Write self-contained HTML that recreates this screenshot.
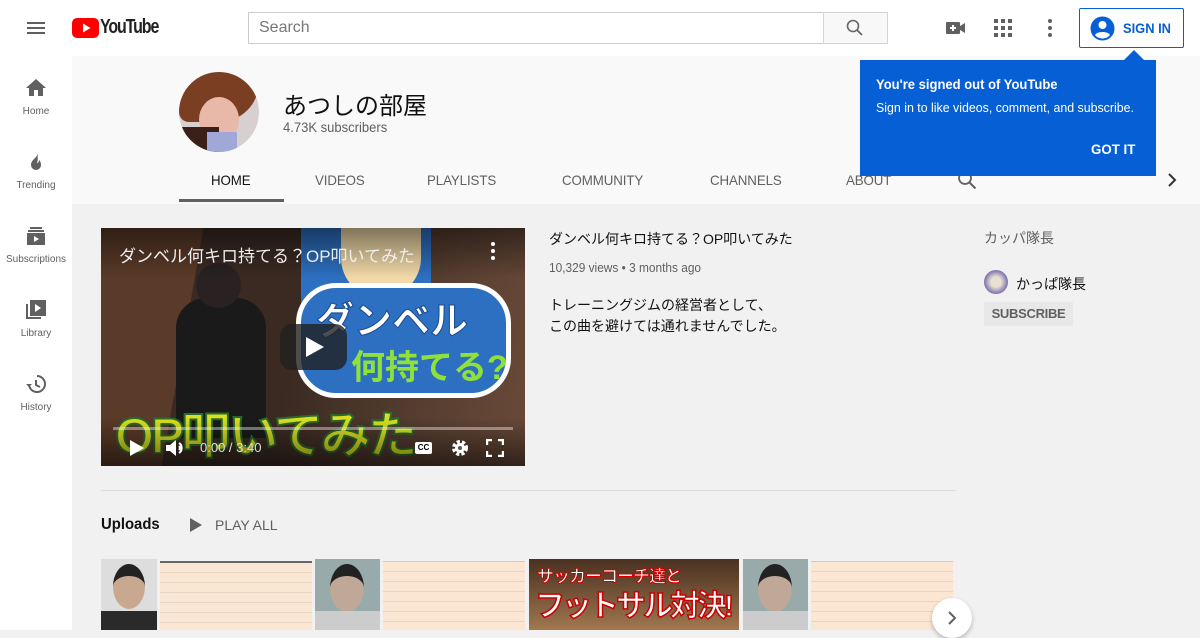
<!DOCTYPE html>
<html><head><meta charset="utf-8"><style>
*{box-sizing:border-box;margin:0;padding:0}
body{width:1200px;height:630px;overflow:hidden;background:#f1f1f1;font-family:"Liberation Sans","Noto Sans CJK JP",sans-serif;position:relative;color:#111}
.abs{position:absolute}
.hdr{left:0;top:0;width:1200px;height:56px;background:#fff}
.side{left:0;top:56px;width:72px;height:574px;background:#fff}
.si{position:absolute;left:0;width:72px;text-align:center;font-size:10px;color:#606060}
.si svg{display:block;margin:0 auto 6px}
.ch{left:72px;top:56px;width:1128px;height:148px;background:#f9f9f9}
.tab{position:absolute;top:172px;font-size:14px;color:#606060;letter-spacing:-.1px;transform:scaleX(.95);transform-origin:left}
</style></head><body>
<div class="abs hdr"></div>
<svg class="abs" style="left:24px;top:16px" width="24" height="24"><path d="M3 6h18v2H3zM3 11h18v2H3zM3 16h18v2H3z" fill="#606060"/></svg>
<svg class="abs" style="left:72px;top:18px" width="30" height="20"><rect x="0" y="0" width="27" height="20" rx="5" fill="#f00"/><path d="M11 5.5l7.5 4.5-7.5 4.5z" fill="#fff"/></svg>
<div class="abs" style="left:100px;top:16px;font-size:20px;font-weight:bold;letter-spacing:-1.4px;transform:scaleX(.8);transform-origin:left;color:#222">YouTube</div>
<div class="abs" style="left:248px;top:12px;width:576px;height:32px;border:1px solid #ccc;background:#fff;font-size:16px;color:#777;padding:6px 10px">Search</div>
<div class="abs" style="left:823px;top:12px;width:65px;height:32px;border:1px solid #d3d3d3;background:#f8f8f8"></div>
<svg class="abs" style="left:845px;top:18px" width="20" height="20"><circle cx="8" cy="8" r="5.5" stroke="#666" stroke-width="1.6" fill="none"/><path d="M12 12l5 5" stroke="#666" stroke-width="1.8"/></svg>
<svg class="abs" style="left:944px;top:17px" width="22" height="22"><rect x="2" y="5" width="14" height="12" rx="1" fill="#606060"/><path d="M16 9l5-3v10l-5-3z" fill="#606060"/><path d="M9 8v6M6 11h6" stroke="#fff" stroke-width="2"/></svg>
<svg class="abs" style="left:993px;top:18px" width="20" height="20"><g fill="#606060"><rect x="1" y="1" width="4" height="4"/><rect x="8" y="1" width="4" height="4"/><rect x="15" y="1" width="4" height="4"/><rect x="1" y="8" width="4" height="4"/><rect x="8" y="8" width="4" height="4"/><rect x="15" y="8" width="4" height="4"/><rect x="1" y="15" width="4" height="4"/><rect x="8" y="15" width="4" height="4"/><rect x="15" y="15" width="4" height="4"/></g></svg>
<svg class="abs" style="left:1040px;top:17px" width="20" height="22"><g fill="#606060"><circle cx="10" cy="4" r="2"/><circle cx="10" cy="11" r="2"/><circle cx="10" cy="18" r="2"/></g></svg>
<div class="abs" style="left:1079px;top:8px;width:105px;height:40px;border:1px solid #065fd4;border-radius:2px;background:#fff"></div>
<svg class="abs" style="left:1090px;top:16px" width="25" height="25"><circle cx="12.5" cy="12.5" r="12" fill="#065fd4"/><circle cx="12.5" cy="9" r="4" fill="#fff"/><path d="M5 19c2-4 13-4 15 0c-2 2.5-5 3.5-7.5 3.5S7 21.5 5 19z" fill="#fff"/></svg>
<div class="abs" style="left:1123px;top:20px;font-size:14px;font-weight:bold;color:#065fd4;transform:scaleX(.92);transform-origin:left">SIGN IN</div>

<div class="abs side"></div>
<div class="si" style="top:76px"><svg width="24" height="24"><path d="M10 20v-6h4v6h5v-8h3L12 3 2 12h3v8z" fill="#606060"/></svg>Home</div>
<div class="si" style="top:150px"><svg width="24" height="24"><path d="M13 2c1 3-1 5-2 6-2 2-4 4-4 7a5 5 0 0010 0c0-3-1-4-2-5 0 2-1 3-2 3 1-3 1-7 0-11z" fill="#606060"/></svg>Trending</div>
<div class="si" style="top:224px"><svg width="24" height="24"><g fill="#606060"><rect x="6" y="3" width="12" height="2"/><rect x="4" y="6" width="16" height="2"/><rect x="3" y="9" width="18" height="12"/></g><path d="M10 12v6l5-3z" fill="#fff"/></svg>Subscriptions</div>
<div class="si" style="top:298px"><svg width="24" height="24"><g fill="#606060"><rect x="2" y="6" width="2" height="15"/><rect x="2" y="19" width="15" height="2"/><rect x="6" y="2" width="16" height="16"/></g><path d="M11 6v8l6-4z" fill="#fff"/></svg>Library</div>
<div class="si" style="top:372px"><svg width="24" height="24"><path d="M5 12a8 8 0 108-8" stroke="#606060" stroke-width="2" fill="none"/><path d="M2 12l3 3 3-3z" fill="#606060"/><path d="M12 8v5l4 2" stroke="#606060" stroke-width="2" fill="none"/></svg>History</div>

<div class="abs ch"></div>
<div class="abs" style="left:179px;top:72px;width:80px;height:80px;border-radius:50%;overflow:hidden;background:#d8d0d0">
<div class="abs" style="left:0;top:0;width:80px;height:50px;background:#7a3e22;border-radius:0 0 40px 10px"></div>
<div class="abs" style="left:20px;top:25px;width:40px;height:45px;background:#e8b8a8;border-radius:50%"></div>
<div class="abs" style="left:0;top:55px;width:40px;height:30px;background:#3a2018"></div>
<div class="abs" style="left:28px;top:60px;width:30px;height:25px;background:#a0a8d8"></div>
</div>
<div class="abs" style="left:283px;top:86px;font-size:24px;color:#111">あつしの部屋</div>
<div class="abs" style="left:283px;top:119px;font-size:14px;color:#606060;transform:scaleX(.93);transform-origin:left">4.73K subscribers</div>
<div class="tab" style="left:211px;color:#111">HOME</div>
<div class="abs" style="left:179px;top:199px;width:105px;height:3px;background:#606060"></div>
<div class="tab" style="left:315px">VIDEOS</div>
<div class="tab" style="left:427px">PLAYLISTS</div>
<div class="tab" style="left:562px">COMMUNITY</div>
<div class="tab" style="left:710px">CHANNELS</div>
<div class="tab" style="left:846px">ABOUT</div>
<svg class="abs" style="left:957px;top:170px" width="22" height="22"><circle cx="8" cy="8" r="6" stroke="#606060" stroke-width="1.8" fill="none"/><path d="M12.5 12.5l6 6" stroke="#606060" stroke-width="2"/></svg>
<svg class="abs" style="left:1164px;top:171px" width="16" height="18"><path d="M5 3l6 6-6 6" stroke="#333" stroke-width="2" fill="none"/></svg>

<div class="abs" style="left:860px;top:60px;width:296px;height:116px;background:#065fd4"></div>
<div class="abs" style="left:1124px;top:50px;width:0;height:0;border-left:10px solid transparent;border-right:10px solid transparent;border-bottom:10px solid #065fd4"></div>
<div class="abs" style="left:876px;top:76px;font-size:14px;font-weight:bold;color:#fff;transform:scaleX(.93);transform-origin:left">You're signed out of YouTube</div>
<div class="abs" style="left:876px;top:101px;font-size:12.5px;color:#fff;transform:scaleX(.99);transform-origin:left">Sign in to like videos, comment, and subscribe.</div>
<div class="abs" style="left:1091px;top:141px;font-size:14px;font-weight:bold;color:#fff;transform:scaleX(.95);transform-origin:left">GOT IT</div>

<div class="abs" style="left:101px;top:228px;width:424px;height:238px;overflow:hidden;background:linear-gradient(100deg,#5a3a28 0 22%,#3a2a22 22% 45%,#5a4032 80%,#6a4a38)">
<div class="abs" style="left:200px;top:0;width:130px;height:130px;background:#2d6fc0"></div>
<div class="abs" style="left:240px;top:0;width:80px;height:70px;background:#f1d9a8;border-radius:0 0 40px 40px"></div>
<div class="abs" style="left:75px;top:70px;width:90px;height:140px;background:#1a1a1a;border-radius:30px 30px 0 0"></div>
<div class="abs" style="left:95px;top:35px;width:45px;height:45px;background:#2a2222;border-radius:50%"></div>
<div class="abs" style="left:195px;top:55px;width:215px;height:115px;background:#2d6fc0;border-radius:40px;border:5px solid #fff"></div>
<div class="abs" style="left:215px;top:62px;font-size:38px;font-weight:bold;color:#fff;-webkit-text-stroke:1px #1a4a90">ダンベル</div>
<div class="abs" style="left:250px;top:112px;font-size:34px;font-weight:bold;color:#8fe03a">何持てる?</div>
<div class="abs" style="left:14px;top:168px;font-size:50px;font-weight:bold;color:#d8e020;-webkit-text-stroke:2px #2a6a2a;letter-spacing:-3px">OP叩いてみた</div>
<div class="abs" style="left:0;top:0;width:424px;height:50px;background:linear-gradient(#0007,#0000)"></div>
<div class="abs" style="left:18px;top:14px;font-size:17px;color:#eee">ダンベル何キロ持てる？OP叩いてみた</div>
<svg class="abs" style="left:386px;top:12px" width="12" height="22"><g fill="#fff"><circle cx="6" cy="4" r="2"/><circle cx="6" cy="11" r="2"/><circle cx="6" cy="18" r="2"/></g></svg>
<div class="abs" style="left:179px;top:96px;width:67px;height:46px;border-radius:12px;background:#212121cc"></div>
<svg class="abs" style="left:201px;top:107px" width="24" height="24"><path d="M4 2l18 10-18 10z" fill="#fff"/></svg>
<div class="abs" style="left:0;top:190px;width:424px;height:48px;background:linear-gradient(#0000,#0008)"></div>
<div class="abs" style="left:12px;top:199px;width:400px;height:3px;background:#fff6"></div>
<svg class="abs" style="left:28px;top:212px" width="16" height="16"><path d="M1 0l14 8-14 8z" fill="#fff"/></svg>
<svg class="abs" style="left:64px;top:210px" width="22" height="20"><path d="M1 7h4l6-5v16l-6-5H1z" fill="#fff"/><path d="M14 5a6 6 0 010 10M14 8a3 3 0 010 4" stroke="#fff" stroke-width="2" fill="none"/></svg>
<div class="abs" style="left:99px;top:212px;font-size:13px;color:#ddd">0:00 / 3:40</div>
<div class="abs" style="left:314px;top:214px;width:17px;height:12px;background:#fff;border-radius:2px;font-size:8px;font-weight:bold;color:#000;text-align:center;line-height:12px">CC</div>
<svg class="abs" style="left:349px;top:210px" width="20" height="20"><circle cx="10" cy="10" r="6" fill="none" stroke="#fff" stroke-width="4" stroke-dasharray="3 2"/><circle cx="10" cy="10" r="5" fill="#fff"/><circle cx="10" cy="10" r="2" fill="#555"/></svg>
<svg class="abs" style="left:385px;top:211px" width="18" height="18"><path d="M1 6V1h5M12 1h5v5M17 12v5h-5M6 17H1v-5" stroke="#fff" stroke-width="2.4" fill="none"/></svg>
</div>

<div class="abs" style="left:549px;top:229px;font-size:14px;color:#111">ダンベル何キロ持てる？OP叩いてみた</div>
<div class="abs" style="left:549px;top:261px;font-size:12.5px;color:#606060;transform:scaleX(.95);transform-origin:left">10,329 views • 3 months ago</div>
<div class="abs" style="left:549px;top:295px;font-size:14px;line-height:21px;color:#111">トレーニングジムの経営者として、<br>この曲を避けては通れませんでした。</div>

<div class="abs" style="left:984px;top:228px;font-size:14px;color:#606060">カッパ隊長</div>
<div class="abs" style="left:984px;top:270px;width:24px;height:24px;border-radius:50%;background:radial-gradient(#e8e0d0 30%,#7a70b0 70%)"></div>
<div class="abs" style="left:1016px;top:274px;font-size:14px;color:#111">かっぱ隊長</div>
<div class="abs" style="left:984px;top:302px;width:89px;height:24px;background:#e8e8e8;font-size:13px;font-weight:bold;color:#606060;text-align:center;line-height:24px;letter-spacing:-.3px">SUBSCRIBE</div>

<div class="abs" style="left:101px;top:490px;width:855px;height:1px;background:#ddd"></div>
<div class="abs" style="left:101px;top:516px;font-size:16px;font-weight:bold;transform:scaleX(.93);transform-origin:left">Uploads</div>
<svg class="abs" style="left:188px;top:517px" width="16" height="16"><path d="M2 1l12 7-12 7z" fill="#606060"/></svg>
<div class="abs" style="left:215px;top:517px;font-size:14px;color:#606060">PLAY ALL</div>

<div class="abs" style="left:101px;top:559px;width:56px;height:71px;background:#ddd;overflow:hidden"><div class="abs" style="left:12px;top:5px;width:32px;height:45px;border-radius:50%;background:#c9a890;border-top:12px solid #222"></div><div class="abs" style="left:0;top:52px;width:56px;height:20px;background:#2a2a2a"></div></div>
<div class="abs" style="left:160px;top:561px;width:152px;height:69px;background:repeating-linear-gradient(#fbe6d4 0 9px,#e6d4c4 9px 10px);border-top:2px solid #666"></div>
<div class="abs" style="left:315px;top:559px;width:65px;height:71px;background:#9aa;overflow:hidden"><div class="abs" style="left:15px;top:5px;width:34px;height:48px;border-radius:50%;background:#c0a898;border-top:12px solid #222"></div><div class="abs" style="left:0;top:52px;width:65px;height:20px;background:#ccc"></div></div>
<div class="abs" style="left:383px;top:561px;width:142px;height:69px;background:repeating-linear-gradient(#fbe6d4 0 9px,#e6d4c4 9px 10px);border-top:1px solid #ccc"></div>
<div class="abs" style="left:529px;top:559px;width:210px;height:71px;background:linear-gradient(#4a3020,#a07850);overflow:hidden">
<div style="position:absolute;left:8px;top:3px;font-size:17px;font-weight:bold;color:#fff;-webkit-text-stroke:1px #c00;letter-spacing:-1px">サッカーコーチ達と</div>
<div style="position:absolute;left:6px;top:22px;font-size:30px;font-weight:bold;color:#fff;-webkit-text-stroke:1.5px #c00;letter-spacing:-3px">フットサル対決!</div></div>
<div class="abs" style="left:743px;top:559px;width:65px;height:71px;background:#9aa;overflow:hidden"><div class="abs" style="left:15px;top:5px;width:34px;height:48px;border-radius:50%;background:#c0a898;border-top:12px solid #222"></div><div class="abs" style="left:0;top:52px;width:65px;height:20px;background:#ccc"></div></div>
<div class="abs" style="left:811px;top:561px;width:142px;height:69px;background:repeating-linear-gradient(#fbe6d4 0 9px,#e6d4c4 9px 10px);border-top:1px solid #ccc"></div>
<div class="abs" style="left:932px;top:598px;width:40px;height:40px;border-radius:50%;background:#fff;box-shadow:0 2px 4px #0004"></div>
<svg class="abs" style="left:944px;top:609px" width="16" height="18"><path d="M5 3l6 6-6 6" stroke="#606060" stroke-width="2" fill="none"/></svg>
</body></html>
